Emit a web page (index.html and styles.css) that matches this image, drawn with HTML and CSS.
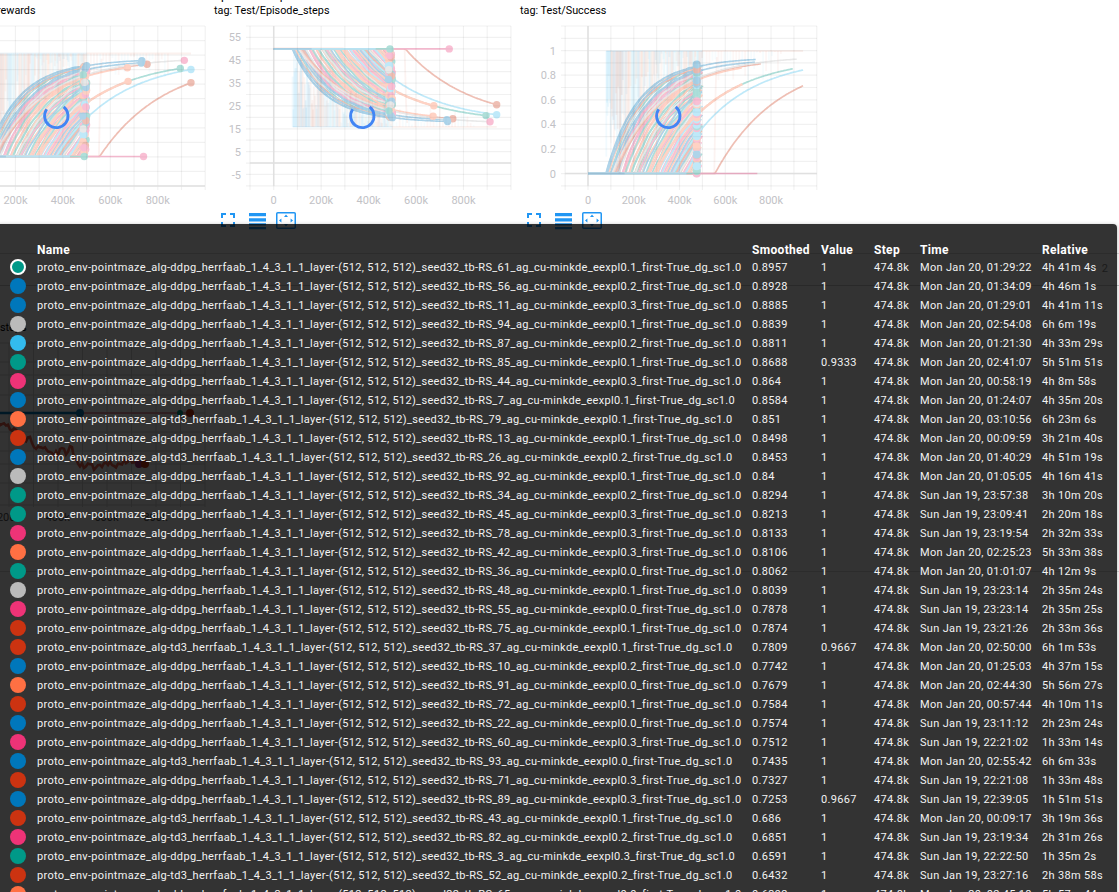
FILE: index.html
```html
<!DOCTYPE html>
<html lang="en">
<head>
<meta charset="utf-8">
<title>Scalars</title>
<link rel="stylesheet" href="styles.css">
</head>
<body>
<svg class="defs" width="0" height="0">
  <symbol id="i-full" viewBox="0 0 14 14"><path d="M1 5V1h4M9 1h4v4M13 9v4H9M5 13H1V9" fill="none" stroke="currentColor" stroke-width="2"/></symbol>
  <symbol id="i-rows" viewBox="0 0 17 17"><path d="M0 0h17v3.2H0zM0 5.2h17v3.2H0zM0 10.2h17v2.2H0zM0 14h17v2.2H0z" fill="currentColor"/></symbol>
  <symbol id="i-fit" viewBox="0 0 20 17"><rect x=".75" y=".75" width="18.5" height="15.5" rx="1" fill="none" stroke="currentColor" stroke-width="1.5"/><path d="M8 5L10 2.6 12 5zM8 12l2 2.4 2-2.4zM5.4 6.5L3 8.5l2.4 2zM14.6 6.5L17 8.5l-2.4 2z" fill="currentColor"/></symbol>
</svg>
<main class="page">
  <section class="charts">
    <article class="chart">
      <h3 class="title">Episode_rewards</h3>
      <p class="tag">tag: Test/Episode_rewards</p>
      <svg class="plot" id="rewards" viewBox="-92 20 298 190"></svg>
      <div class="tools"></div>
    </article>
    <article class="chart">
      <h3 class="title">Episode_steps</h3>
      <p class="tag">tag: Test/Episode_steps</p>
      <svg class="plot" id="steps" viewBox="214 20 298 190"></svg>
      <div class="tools"></div>
    </article>
    <article class="chart">
      <h3 class="title">Success</h3>
      <p class="tag">tag: Test/Success</p>
      <svg class="plot" id="success" viewBox="520 20 298 190"></svg>
      <div class="tools"></div>
    </article>
  </section>
  <header class="section-head"><span>2</span></header>
  <section class="lower">
    <p class="tag lower-tag">steps</p>
    <svg class="lower-plot" id="lower" viewBox="0 335 220 190"></svg>
  </section>
</main>
<div class="tooltip">
  <div class="row head"><span></span><span>Name</span><span>Smoothed</span><span>Value</span><span>Step</span><span>Time</span><span>Relative</span></div>
  <div id="rows"></div>
</div>
<script src="app.js"></script>
</body>
</html>
```
FILE: styles.css
```css
* { box-sizing: border-box; }
html, body { height: 100%; }
body { margin: 0; overflow: hidden; background: #fff; font-family: Roboto, "Noto Sans", sans-serif; color: #000; position: relative; }
.defs { position: absolute; }
.page { height: 892px; overflow: hidden; }
.charts { display: flex; gap: 8px; height: 253px; padding-left: 0; margin-left: -92px; }
.chart { width: 298px; flex: none; }
.title { margin: -12px 0 0; height: 15px; font-size: 12px; line-height: 15px; font-weight: 400; letter-spacing: .1px; }
.tag { margin: 0; height: 17px; line-height: 15px; font-size: 10.8px; white-space: nowrap; }
.plot { display: block; width: 298px; height: 190px; }
.tools { display: flex; gap: 13px; padding: 2px 0 0 7px; height: 18px; align-items: flex-start; color: #2196f3; }
.tools svg { display: block; flex: none; }
.i-full { width: 14px; height: 14px; margin-top: 1px; }
.i-rows { width: 17px; height: 17px; margin: 1px 0 0 1px; }
.i-fit { width: 20px; height: 17px; margin-left: -3px; }
.section-head { height: 33px; border-top: 1px solid #ddd; border-bottom: 1px solid #ccc; display: flex; justify-content: flex-end; align-items: center; padding: 0 11px 2px 0; font-size: 11px; color: #888; }
.lower { height: 286px; border-bottom: 1px solid #ddd; padding-top: 34px; }
.lower-tag { height: 15px; }
.lower-plot { display: block; width: 220px; height: 190px; }
.axis { font-size: 11px; fill: #c2c2c6; }
.lower-plot .axis { fill: #555; }
.tooltip { position: absolute; left: -4px; top: 224px; width: 1121px; height: 700px; padding: 18px 0 0 14px; border-radius: 4px; background: rgba(0, 0, 0, .8); box-shadow: 0 1px 4px rgba(0, 0, 0, .3); color: #f2f2f2; }
.row { display: grid; grid-template-columns: 27px 715px 69px 53px 46px 122px 80px; height: 19px; align-items: center; font-size: 11px; letter-spacing: .325px; white-space: nowrap; }
.head { height: 16px; font-size: 12px; font-weight: 700; color: #fff; }
.swatch { width: 16px; height: 16px; margin-bottom: 1px; border-radius: 50%; }
.swatch.active { border: 2px solid #fff; }
```
FILE: app.js
```js
const C = { b: '#0077bb', c: '#33bbee', g: '#009988', p: '#ee3377', r: '#cc3311', o: '#ff7043', s: '#bbbbbb' };

// color | algorithm | run | eexpl | smoothed | value | time | relative
const runs = `g|ddpg|61|0.1|0.8957|1|Mon Jan 20, 01:29:22|4h 41m 4s
b|ddpg|56|0.2|0.8928|1|Mon Jan 20, 01:34:09|4h 46m 1s
b|ddpg|11|0.3|0.8885|1|Mon Jan 20, 01:29:01|4h 41m 11s
s|ddpg|94|0.1|0.8839|1|Mon Jan 20, 02:54:08|6h 6m 19s
c|ddpg|87|0.2|0.8811|1|Mon Jan 20, 01:21:30|4h 33m 29s
g|ddpg|85|0.1|0.8688|0.9333|Mon Jan 20, 02:41:07|5h 51m 51s
p|ddpg|44|0.3|0.864|1|Mon Jan 20, 00:58:19|4h 8m 58s
b|ddpg|7|0.1|0.8584|1|Mon Jan 20, 01:24:07|4h 35m 20s
o|td3|79|0.1|0.851|1|Mon Jan 20, 03:10:56|6h 23m 6s
r|ddpg|13|0.1|0.8498|1|Mon Jan 20, 00:09:59|3h 21m 40s
b|td3|26|0.2|0.8453|1|Mon Jan 20, 01:40:29|4h 51m 19s
s|ddpg|92|0.1|0.84|1|Mon Jan 20, 01:05:05|4h 16m 41s
g|ddpg|34|0.2|0.8294|1|Sun Jan 19, 23:57:38|3h 10m 20s
g|ddpg|45|0.3|0.8213|1|Sun Jan 19, 23:09:41|2h 20m 18s
p|ddpg|78|0.3|0.8133|1|Sun Jan 19, 23:19:54|2h 32m 33s
o|ddpg|42|0.3|0.8106|1|Mon Jan 20, 02:25:23|5h 33m 38s
g|ddpg|36|0.0|0.8062|1|Mon Jan 20, 01:01:07|4h 12m 9s
s|ddpg|48|0.1|0.8039|1|Sun Jan 19, 23:23:14|2h 35m 24s
p|ddpg|55|0.0|0.7878|1|Sun Jan 19, 23:23:14|2h 35m 25s
r|ddpg|75|0.1|0.7874|1|Sun Jan 19, 23:21:26|2h 33m 36s
r|td3|37|0.1|0.7809|0.9667|Mon Jan 20, 02:50:00|6h 1m 53s
b|ddpg|10|0.2|0.7742|1|Mon Jan 20, 01:25:03|4h 37m 15s
o|ddpg|91|0.0|0.7679|1|Mon Jan 20, 02:44:30|5h 56m 27s
r|ddpg|72|0.1|0.7584|1|Mon Jan 20, 00:57:44|4h 10m 11s
b|ddpg|22|0.0|0.7574|1|Sun Jan 19, 23:11:12|2h 23m 24s
p|ddpg|60|0.3|0.7512|1|Sun Jan 19, 22:21:02|1h 33m 14s
b|td3|93|0.0|0.7435|1|Mon Jan 20, 02:55:42|6h 6m 33s
r|ddpg|71|0.3|0.7327|1|Sun Jan 19, 22:21:08|1h 33m 48s
b|ddpg|89|0.3|0.7253|0.9667|Sun Jan 19, 22:39:05|1h 51m 51s
r|td3|43|0.1|0.686|1|Mon Jan 20, 00:09:17|3h 19m 36s
p|td3|82|0.2|0.6851|1|Sun Jan 19, 23:19:34|2h 31m 26s
g|ddpg|3|0.3|0.6591|1|Sun Jan 19, 22:22:50|1h 35m 2s
r|td3|52|0.2|0.6432|1|Sun Jan 19, 23:27:16|2h 38m 58s
o|ddpg|65|0.0|0.6392|1|Mon Jan 20, 02:45:18|5h 57m 44s`.split('\n').map(l => l.split('|'));

document.getElementById('rows').innerHTML = runs.map(([c, alg, n, e, sm, v, t, rel], i) =>
  `<div class="row"><span class="swatch${i ? '' : ' active'}" style="background-color:${C[c]}"></span>` +
  `<span>proto_env-pointmaze_alg-${alg}_herrfaab_1_4_3_1_1_layer-(512, 512, 512)_seed32_tb-RS_${n}_ag_cu-minkde_eexpl${e}_first-True_dg_sc1.0</span>` +
  `<span>${sm}</span><span>${v}</span><span>474.8k</span><span>${t}</span><span>${rel}</span></div>`).join('');

document.querySelectorAll('.tools').forEach(t => {
  t.innerHTML = ['full', 'rows', 'fit'].map(n => `<svg class="i-${n}"><use href="#i-${n}"/></svg>`).join('');
});

let seed = 11;
const rnd = () => (seed = (seed * 16807) % 2147483647) / 2147483647;
const palette = ['b', 'c', 'g', 'p', 'r', 'o', 's', 'c', 'g', 'o', 'p'];
const pick = () => palette[Math.floor(rnd() * palette.length)];

// Each series: start step (k), time constant, asymptote, last step, color
const series = [];
for (let i = 0; i < 100; i++) {
  const f = i / 99;
  const start = 80 + 398 * Math.pow(f, 1.1) + rnd() * 14;
  series.push({ s: start, tau: 132 + 120 * f + rnd() * 25, a: .93, end: 484 + rnd() * 16, c: pick(), j: rnd() * 6 });
}
series.sort(() => rnd() - .5);
series.push(
  { s: 120, tau: 209, a: .94, end: 755, c: 'r' },
  { s: 292, tau: 262, a: .95, end: 895, c: 'g' },
  { s: 292, tau: 262, a: .95, end: 675, c: 'o', w: 2.4 },
  { s: 110, tau: 215, a: .93, end: 672, c: 'o' },
  { s: 372, tau: 258, a: .95, end: 940, c: 'c' },
  { s: 555, tau: 275, a: .95, end: 940, c: 'r' },
  { s: 78, tau: 138, a: .925, end: 500, c: 'b', w: 1.6 },
  { s: 84, tau: 155, a: .945, end: 733, c: 'b', w: 1.6 },
  { s: 100, tau: 168, a: .93, end: 730, c: 'b' },
  { s: 105, tau: 225, a: .96, end: 912, c: 's', w: 1.6, dot: 'p' },
  { s: 990, tau: 1, a: 0, end: 740, c: 'p', w: 1.6 },
  { s: 990, tau: 1, a: 0, end: 490, c: 'g', w: 1.6 }
);

function value(q, t) {
  if (t <= q.s) return 0;
  const k = q.a * (1 - Math.exp(-(t - q.s) / q.tau));
  return k + (q.j ? Math.sin(t / 11 + q.j) * .006 : 0);
}

function draw(id, o) {
  const X = t => o.x0 + t * o.kx, Y = v => o.y0 + v * o.ky;
  let h = '<g stroke="#000" stroke-opacity=".055" stroke-width="1.2">';
  for (let t = -100; X(t) <= o.right + 1; t += 100) h += `<path d="M${X(t)} 26V190"/>`;
  o.grid.forEach(y => h += `<path d="M${o.left - 4} ${y}H${o.right}"/>`);
  h += '</g><g stroke="#e0e0e0" stroke-width="1.5">';
  h += `<path d="M${X(0)} 26V186"/><path d="M${o.left} ${o.zero}H${o.right}"/></g>`;
  // unsmoothed traces
  h += '<g fill="none" stroke-width="1.8">';
  for (let t = 80; t < 500; t += 2.6) {
    const c = C[t < 100 ? 'c' : ['b', 'r', 'c', 'o', 's', 'c'][Math.floor(rnd() * 6)]];
    const depth = t < 260 ? rnd() * .8 : 1 - rnd() * .5;
    h += `<path stroke="${c}" stroke-opacity="${t < 150 ? .07 : .05}" d="M${X(t)} ${Y(1)}V${Y(depth)}"/>`;
  }
  for (let t = 505; t < 850; t += 13) h += `<path stroke="${C[rnd() < .5 ? 'r' : 'c']}" stroke-opacity=".04" d="M${X(t)} ${Y(1)}V${Y(1 - rnd() * .25)}"/>`;
  h += `<path stroke="#cc3311" stroke-opacity=".06" d="M${X(552)} ${Y(0)}L${X(558)} ${Y(.7)}L${X(563)} ${Y(.95)}"/>`;
  h += `<path stroke="#0077bb" stroke-opacity=".07" d="M${X(80)} ${Y(1)}H${X(500)}"/><path stroke="#cc3311" stroke-opacity=".07" d="M${X(500)} ${Y(1)}H${X(940)}"/></g>`;
  // smoothed lines and end markers
  let dots = '';
  h += '<g opacity=".31"><g fill="none">';
  series.forEach(q => {
    let d = `M${X(0)} ${Y(0)}`;
    for (let t = Math.min(q.s, q.end); t < q.end; t += 5) d += `L${X(t).toFixed(1)} ${Y(value(q, t)).toFixed(1)}`;
    d += `L${X(q.end)} ${Y(value(q, q.end))}`;
    h += `<path stroke="${C[q.c]}" stroke-width="${q.w || 1.7}" d="${d}"/>`;
    if (!o.cursor) dots += `<circle cx="${X(q.end)}" cy="${Y(value(q, q.end))}" r="3.7" fill="${C[q.dot || q.c]}"/>`;
  });
  h += `<path stroke="${C.c}" stroke-width="1.8" d="M${X(0)} ${Y(0)}H${X(430)}"/><path stroke="${C.b}" stroke-width="1.8" d="M${X(0)} ${Y(0)}H${X(160)}"/></g>`;
  if (o.cursor) {
    for (let i = 0; i < 60; i++) dots += `<circle cx="${X(475)}" cy="${Y(i / 60 * .88)}" r="3.8" fill="${C[pick()]}"/>`;
    [['p', 0], ['g', .02], ['c', .06], ['b', .155], ['o', .22], ['c', .305], ['c', .5], ['p', .59], ['g', .66], ['b', .76], ['r', .85], ['b', .89]]
      .forEach(([c, v]) => dots += `<circle cx="${X(475)}" cy="${Y(v)}" r="4" fill="${C[c]}"/>`);
  }
  h += dots + '</g><g class="axis">';
  for (let t = 0; t <= 800; t += 200) h += `<text x="${X(t)}" y="204" text-anchor="middle">${t ? t + 'k' : 0}</text>`;
  o.labels.forEach(([s, y]) => h += `<text x="${o.left - 9}" y="${y + 4}" text-anchor="end">${s}</text>`);
  h += `</g><path d="M${o.spin - 10} 109.3A11.7 11.7 0 1 0 ${o.spin + 7} 106.9" fill="none" stroke="#4285f4" stroke-width="2.8"/>`;
  document.getElementById(id).innerHTML = h;
}

const range = (n, f) => Array.from({ length: n }, (_, i) => f(i));
draw('rewards', { x0: -32, kx: .2372, y0: 156.5, ky: -103, left: -56, right: 205, zero: 186, spin: 56.7, labels: [], grid: range(12, i => 26 + i * 14.54) });
draw('steps', { x0: 273.7, kx: .2372, y0: 48.9, ky: 78, left: 250, right: 511, zero: 163, spin: 362.7, grid: range(15, i => 26 + i * 11.42),
  labels: [55, 45, 35, 25, 15, 5, -5].map((v, i) => [v, 37.4 + i * 22.85]) });
draw('success', { x0: 588, kx: .2288, y0: 173.5, ky: -122.5, left: 565, right: 817, zero: 173.5, spin: 668.7, cursor: true, grid: range(14, i => 26 + i * 12.3),
  labels: ['1', '0.8', '0.6', '0.4', '0.2', '0'].map((v, i) => [v, 50.5 + i * 24.6]) });

// chart partly hidden by the tooltip
(function () {
  let h = '<g stroke="#d8d8d8" stroke-width="1">';
  for (let x = 9; x <= 206; x += 24.5) h += `<path d="M${x} 343V507"/>`;
  [343, 362, 375, 395, 413, 432, 451, 464, 483, 505].forEach(y => h += `<path d="M0 ${y}H205"/>`);
  h += '</g><path d="M0 413H80" stroke="#0077bb" stroke-width="2.5"/><path d="M80 413H190" stroke="#e0808c" stroke-width="1.3"/>';
  h += '<circle cx="80" cy="413" r="4" fill="#0077bb"/><circle cx="180" cy="413" r="3" fill="#009988"/><circle cx="190" cy="413" r="4" fill="#cc3311"/>';
  const pts = [[0, 423], [10, 428], [22, 437], [30, 440], [34, 449], [41, 445], [46, 452], [68, 452], [72, 447], [76, 462], [90, 466], [100, 468], [108, 463], [120, 465], [130, 460], [146, 464]];
  let d = 'M0 423';
  for (let i = 1; i < pts.length; i++) {
    const [a, b] = pts[i - 1], [x, y] = pts[i];
    for (let u = a; u < x; u += 2) d += `L${u} ${(b + (y - b) * (u - a) / (x - a) + (rnd() - .5) * 8).toFixed(1)}`;
  }
  h += `<path d="${d}" fill="none" stroke="#e8604a" stroke-width="2.6"/><circle cx="139" cy="464" r="4" fill="#aa3377"/><circle cx="145" cy="464" r="4" fill="#cc3311"/><g class="axis">`;
  [[9, '200k'], [57.7, '400k'], [106.5, '600k'], [155.5, '800k']].forEach(([x, s]) => h += `<text x="${x}" y="521" text-anchor="middle">${s}</text>`);
  document.getElementById('lower').innerHTML = h + '</g>';
})();
```
